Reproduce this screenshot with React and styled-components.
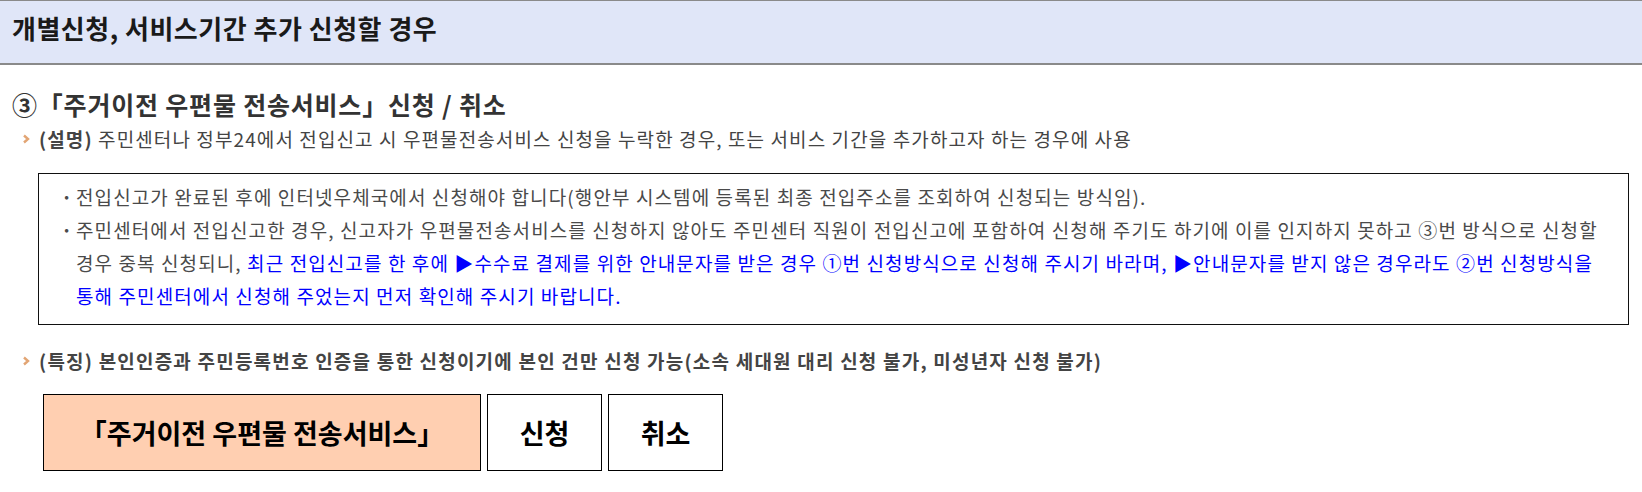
import React from "react";
import styled, { createGlobalStyle } from "styled-components";

const GlobalStyle = createGlobalStyle`
  body {
    margin: 0;
    background: #ffffff;
    font-family: "Noto Sans CJK KR", "Noto Sans", sans-serif;
    color: #444444;
  }
`;

const Chevron = () => (
  <ChevronSvg width="8" height="10" viewBox="0 0 8 10">
    <polyline points="2,1.5 6,5 2,8.5" fill="none" stroke="#e2a574" strokeWidth="2.4" />
  </ChevronSvg>
);

const App = () => {
  return (
    <Page>
      <GlobalStyle />
      <Header>
        <HeaderTitle>개별신청, 서비스기간 추가 신청할 경우</HeaderTitle>
      </Header>
      <Content>
        <SectionTitle>③「주거이전 우편물 전송서비스」신청 / 취소</SectionTitle>
        <Point>
          <Chevron />
          <span>
            <Label>(설명)</Label> 주민센터나 정부24에서 전입신고 시 우편물전송서비스 신청을 누락한 경우, 또는 서비스 기간을 추가하고자 하는 경우에 사용
          </span>
        </Point>
        <NoteBox>
          <NoteList>
            <NoteItem>
              <Bullet>·</Bullet>
              <NoteText>
                전입신고가 완료된 후에 인터넷우체국에서 신청해야 합니다(행안부 시스템에 등록된 최종 전입주소를 조회하여 신청되는 방식임).
              </NoteText>
            </NoteItem>
            <NoteItem>
              <Bullet>·</Bullet>
              <NoteText>
                주민센터에서 전입신고한 경우, 신고자가 우편물전송서비스를 신청하지 않아도 주민센터 직원이 전입신고에 포함하여 신청해 주기도 하기에 이를 인지하지 못하고 ③번 방식으로 신청할 경우 중복 신청되니,{" "}
                <Blue>
                  최근 전입신고를 한 후에 ▶수수료 결제를 위한 안내문자를 받은 경우 ①번 신청방식으로 신청해 주시기 바라며, ▶안내문자를 받지 않은 경우라도 ②번 신청방식을 통해 주민센터에서 신청해 주었는지 먼저 확인해 주시기 바랍니다.
                </Blue>
              </NoteText>
            </NoteItem>
          </NoteList>
        </NoteBox>
        <Point $bold>
          <Chevron />
          <span>(특징) 본인인증과 주민등록번호 인증을 통한 신청이기에 본인 건만 신청 가능(소속 세대원 대리 신청 불가, 미성년자 신청 불가)</span>
        </Point>
        <ButtonRow>
          <ServiceButton $wide>「주거이전 우편물 전송서비스」</ServiceButton>
          <ServiceButton>신청</ServiceButton>
          <ServiceButton>취소</ServiceButton>
        </ButtonRow>
      </Content>
    </Page>
  );
};

const Page = styled.div`
  width: 1642px;
`;

const Header = styled.div`
  height: 62px;
  display: flex;
  align-items: center;
  padding-left: 12px;
  background: #e0e6f8;
  border-top: 1px solid #8a8a8a;
  border-bottom: 2px solid #8a8a8a;
`;

const HeaderTitle = styled.h1`
  margin: 0 0 10px;
  font-size: 26px;
  font-weight: 700;
  color: #1a1a1a;
  letter-spacing: 0.5px;
`;

const Content = styled.div`
  padding: 22px 13px 0 12px;
`;

const SectionTitle = styled.h2`
  margin: 0;
  font-size: 25px;
  line-height: 34px;
  font-weight: 700;
  color: #333333;
  letter-spacing: 0.8px;
`;

const Point = styled.div`
  display: flex;
  align-items: center;
  gap: 9px;
  padding-left: 10px;
  margin-top: ${(p) => (p.$bold ? "21px" : "3px")};
  font-size: 19px;
  line-height: 30px;
  font-weight: ${(p) => (p.$bold ? 700 : 400)};
  letter-spacing: ${(p) => (p.$bold ? "1.2px" : "1.1px")};
  color: #444444;
`;

const ChevronSvg = styled.svg`
  flex: none;
`;

const Label = styled.b`
  font-weight: 700;
`;

const NoteBox = styled.div`
  margin: 19px 0 0 26px;
  border: 1px solid #111111;
  padding: 6px 28px 12px 0;
`;

const NoteList = styled.ul`
  margin: 0;
  padding: 0 0 0 22px;
  list-style: none;
`;

const NoteItem = styled.li`
  display: flex;
  font-size: 19px;
  line-height: 33px;
  letter-spacing: 1.1px;
  color: #4a4a4a;
`;

const Bullet = styled.span`
  flex: none;
  width: 15px;
  font-weight: 700;
`;

const NoteText = styled.span`
  word-break: keep-all;
`;

const Blue = styled.span`
  color: #0000ff;
`;

const ButtonRow = styled.div`
  display: flex;
  gap: 6px;
  margin: 18px 0 0 31px;
`;

const ServiceButton = styled.button`
  width: ${(p) => (p.$wide ? "438px" : "115px")};
  height: 77px;
  border: 1px solid #000000;
  background: ${(p) => (p.$wide ? "#ffcfb1" : "#ffffff")};
  font-family: "Noto Sans CJK KR", "Noto Sans", sans-serif;
  font-size: 27px;
  font-weight: 700;
  color: #000000;
  padding: 0;
  cursor: pointer;
`;

export default App;
